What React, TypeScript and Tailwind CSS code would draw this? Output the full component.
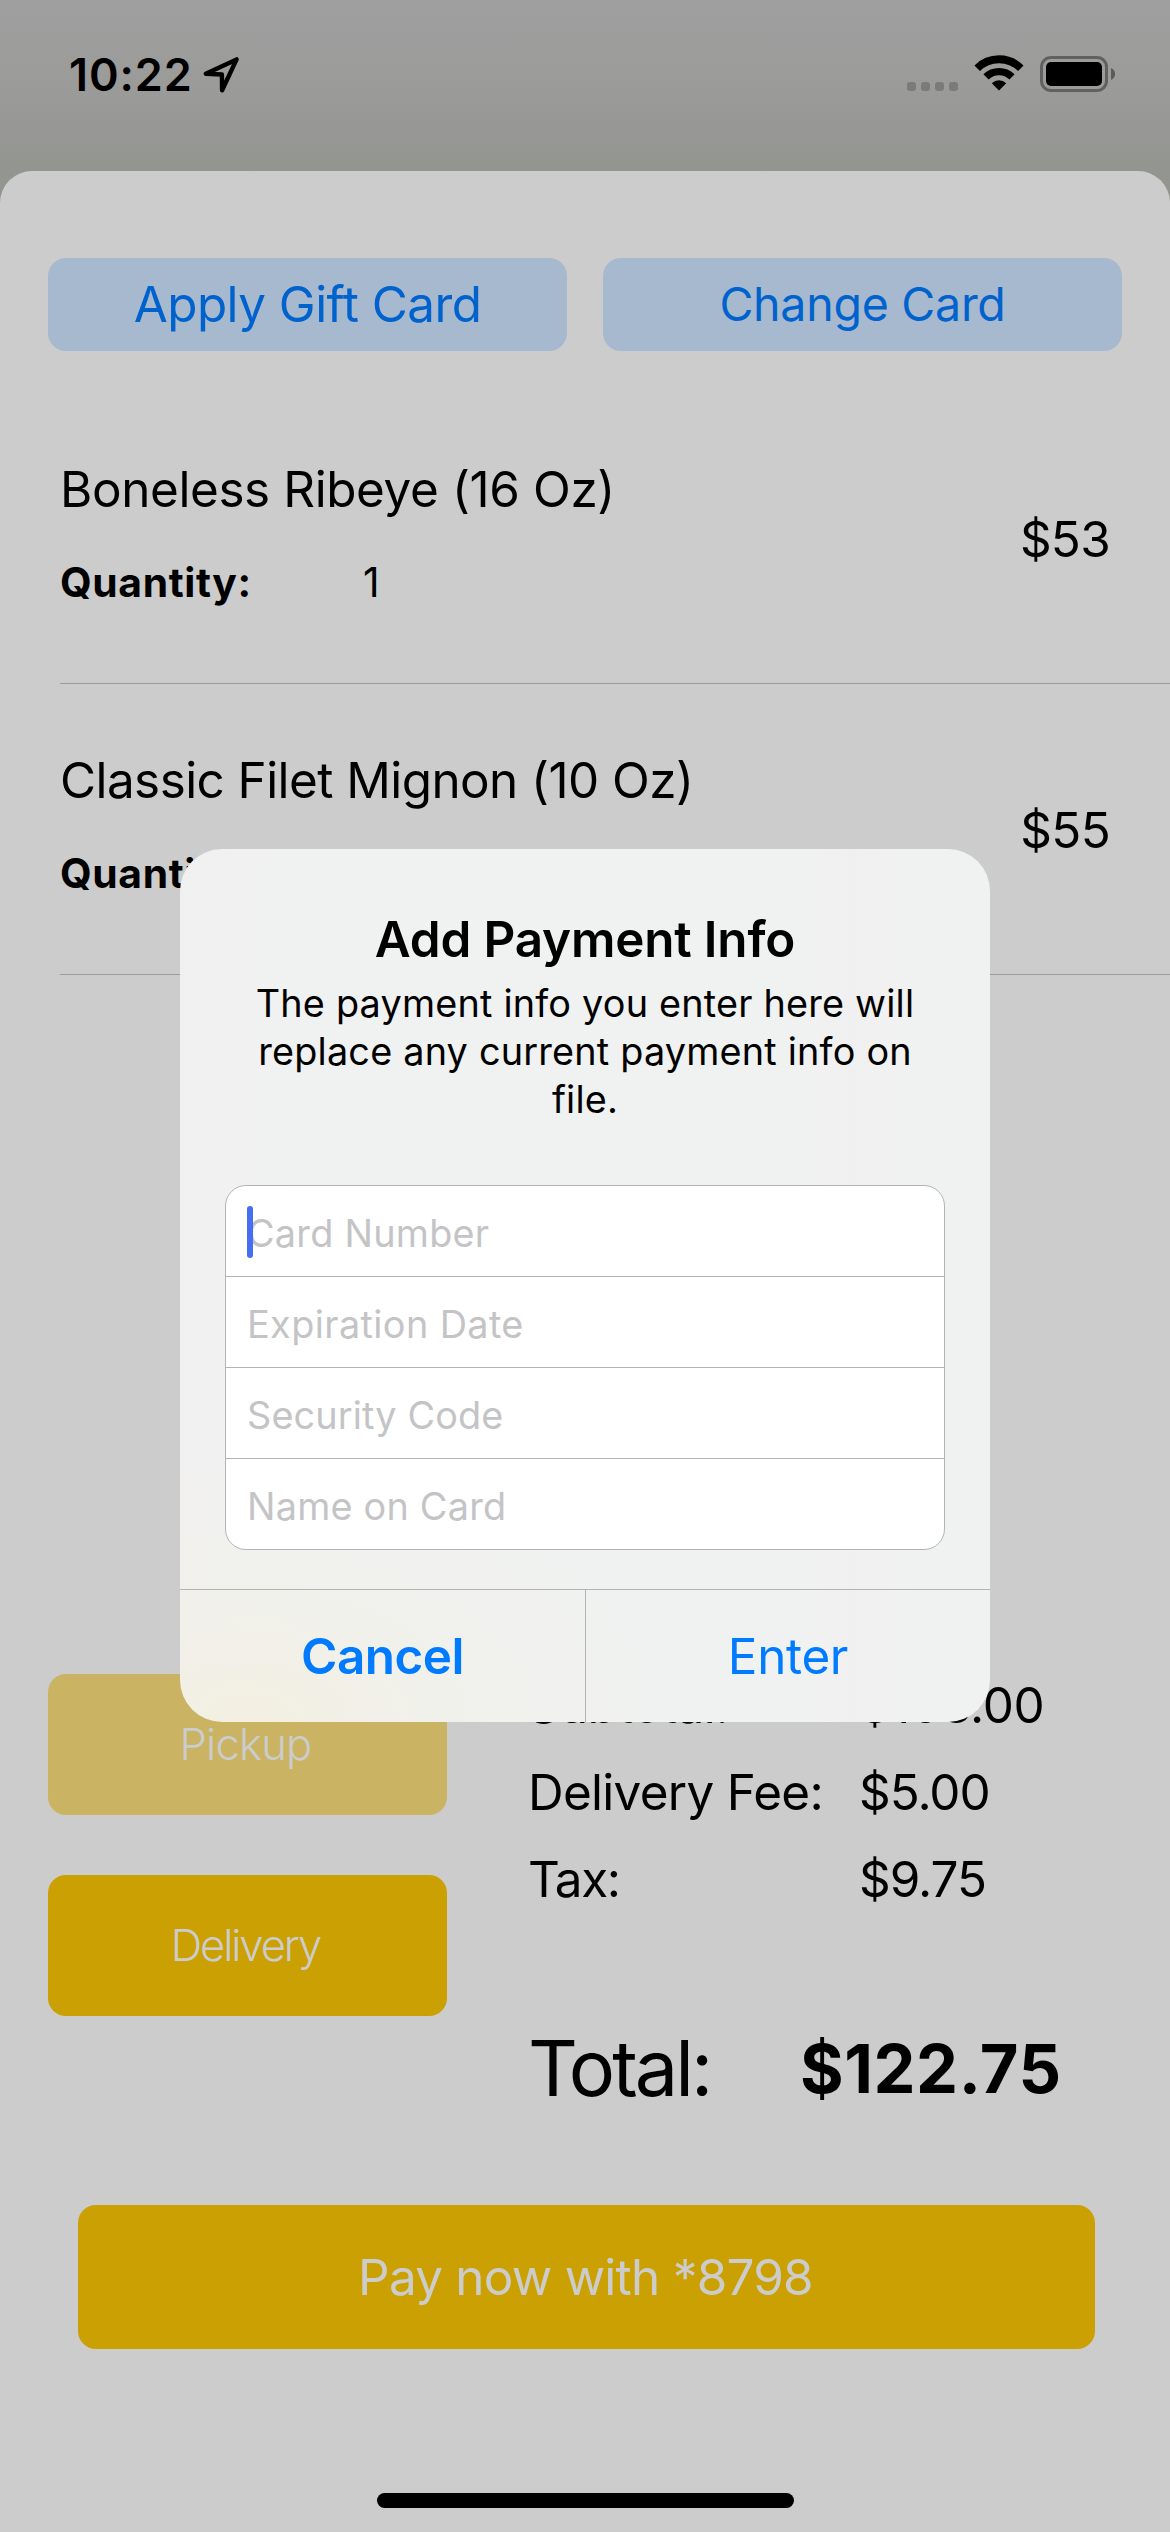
import React from "react";

const items = [
  { name: "Boneless Ribeye (16 Oz)", quantity: 1, price: "$53", tracking: "tracking-[-0.38px]" },
  { name: "Classic Filet Mignon (10 Oz)", quantity: 1, price: "$55", tracking: "tracking-[-0.55px]" },
];

const costs = [
  { label: "Subtotal:", value: "$108.00", labelTracking: "tracking-[-0.69px]", valueTracking: "tracking-[-0.34px]" },
  { label: "Delivery Fee:", value: "$5.00", labelTracking: "tracking-[-0.69px]", valueTracking: "tracking-[-1px]" },
  { label: "Tax:", value: "$9.75", labelTracking: "tracking-[-1.4px]", valueTracking: "tracking-[-1px]" },
];

const fields = [
  { label: "Card Number", tracking: "tracking-[0.25px]" },
  { label: "Expiration Date", tracking: "tracking-[0.4px]" },
  { label: "Security Code", tracking: "tracking-[0.14px]" },
  { label: "Name on Card", tracking: "tracking-[0.22px]" },
];

const message = [
  "The payment info you enter here will",
  "replace any current payment info on",
  "file.",
];

function LocationIcon() {
  return (
    <svg width="37" height="37" viewBox="0 0 37 37" fill="none" stroke="black" strokeWidth="4.4" strokeLinejoin="round">
      <path d="M2.8 17.7 33.6 3.4 19.1 34.3 18.9 18.5Z" />
    </svg>
  );
}

function WifiIcon() {
  return (
    <svg width="50" height="37" viewBox="0 0 50 37" fill="none" stroke="black">
      <path d="M3.2 13.2A31 31 0 0 1 46.8 13.2" strokeWidth="7.8" />
      <path d="M12 21.9A18.6 18.6 0 0 1 38 21.9" strokeWidth="7.4" />
      <path d="M25 35.4 17.8 28.2A10.3 10.3 0 0 1 32.2 28.2Z" fill="black" stroke="none" />
    </svg>
  );
}

function BatteryIcon() {
  return (
    <div className="flex items-center">
      <div className="h-9 w-[68px] rounded-[11px] border-[3px] border-[#616260] p-[3px]">
        <div className="h-full rounded-[5px] bg-black" />
      </div>
      <svg className="ml-[3px]" width="4" height="12" viewBox="0 0 4 12">
        <path d="M0 0C5.4 2.2 5.4 9.8 0 12Z" fill="#5a5b5a" />
      </svg>
    </div>
  );
}

function StatusBar() {
  return (
    <header className="flex h-[171px] items-start justify-between pt-14 pr-[55px] pl-[69px]">
      <div className="flex h-[37px] items-center">
        <span className="text-[45px] leading-9 font-semibold tracking-[0.9px]">10:22</span>
        <span className="ml-2.5">
          <LocationIcon />
        </span>
      </div>
      <div className="flex h-9 items-start">
        <div className="mt-[26px] flex gap-[5px]">
          {[0, 1, 2, 3].map((dot) => (
            <span key={dot} className="size-[9px] rounded-[3px] bg-[#7b7b7a]" />
          ))}
        </div>
        <span className="mt-[-1px] ml-4">
          <WifiIcon />
        </span>
        <span className="ml-4">
          <BatteryIcon />
        </span>
      </div>
    </header>
  );
}

function PaymentDialog() {
  return (
    <div className="absolute top-[849px] left-[180px] flex w-[810px] flex-col overflow-hidden rounded-[42px] bg-[#f0f2f1] bg-[radial-gradient(ellipse_420px_260px_at_70px_873px,#f3efe1_0%,rgba(241,240,233,0.7)_45%,rgba(240,240,238,0)_100%),linear-gradient(90deg,#f1f0f0_0%,#f0f2f1_14%,#f0f2f1_76%,#f1f0f0_83%,#f0f2f1_91%)]">
      <h2 className="mt-[60px] text-center text-[49.4px] leading-[60px] font-semibold tracking-[-0.17px]">
        Add Payment Info
      </h2>
      <div className="mt-2.5 text-center text-[37.8px] leading-[48px] tracking-[0.2px]">
        {message.map((line) => (
          <p key={line}>{line}</p>
        ))}
      </div>
      <div className="mx-[45px] mt-[62px] divide-y divide-[#b2b3b3] overflow-hidden rounded-[21px] border border-[#b2b3b3] bg-white">
        {fields.map((field, index) => (
          <div
            key={field.label}
            className="relative flex h-[91px] items-center pt-1 pl-[21px] last:h-[90px]"
          >
            <span className={`text-[37.8px] leading-[48px] text-[#c4c4c6] ${field.tracking}`}>{field.label}</span>
            {index === 0 && <span className="absolute top-5 left-[21px] h-[52px] w-1.5 rounded-full bg-[#466ef2]" />}
          </div>
        ))}
      </div>
      <div className="mt-[39px] flex h-[133px] border-t border-[#b2b3b3] text-[49.4px] text-[#007aff]">
        <button className="w-[406px] border-r border-[#b2b3b3] font-semibold tracking-[-0.49px]">Cancel</button>
        <button className="flex-1 tracking-[-0.33px]">Enter</button>
      </div>
    </div>
  );
}

export default function App() {
  return (
    <div className="relative h-[2532px] w-[1170px] overflow-hidden bg-[linear-gradient(180deg,#9f9f9f_0px,#9b9b9a_85px,#939590_171px,#939590_220px)] font-['Inter',sans-serif] text-black">
      <StatusBar />
      <main className="flex h-[2361px] flex-col rounded-t-[32px] bg-[#cccccc] pt-[87px]">
        <div className="flex gap-9 px-12 text-[#0062cc]">
          <button className="h-[93px] w-[519px] rounded-[18px] bg-[#a7b9cf] text-[49.4px] tracking-[-0.53px]">
            Apply Gift Card
          </button>
          <button className="h-[93px] w-[519px] rounded-[18px] bg-[#a7b9cf] text-[46.5px] tracking-[-0.26px]">
            Change Card
          </button>
        </div>

        <ul className="mt-[42px]">
          {items.map((item) => (
            <li
              key={item.name}
              className="ml-[60px] flex h-[291px] items-center justify-between border-b border-[#9c9c9d] pt-0.5 pr-[60px]"
            >
              <div className="pb-3">
                <p className={`text-[49.4px] leading-[60px] ${item.tracking}`}>{item.name}</p>
                <p className="mt-[38px] flex text-[40.8px] leading-[50px]">
                  <span className="w-[303px] font-bold tracking-[0.62px]">Quantity:</span>
                  <span>{item.quantity}</span>
                </p>
              </div>
              <span className="text-[49.4px] leading-[60px] tracking-[-0.7px]">{item.price}</span>
            </li>
          ))}
        </ul>

        <section className="mt-[687px] flex pl-12">
          <div className="flex w-[399px] flex-col gap-[60px] pt-3 text-[43.6px] font-light text-[#cccccc]">
            <button className="h-[141px] rounded-[18px] bg-[#cab464] pr-1 tracking-[-0.8px]">Pickup</button>
            <button className="h-[141px] rounded-[18px] bg-[#cba002] pr-1 tracking-[-2.1px]">Delivery</button>
          </div>
          <div className="ml-[81px]">
            {costs.map((cost) => (
              <div key={cost.label} className="flex h-[87px] items-center text-[49.4px]">
                <span className={`w-[331px] ${cost.labelTracking}`}>{cost.label}</span>
                <span className={cost.valueTracking}>{cost.value}</span>
              </div>
            ))}
            <div className="mt-[96px] flex h-[100px] items-center">
              <span className="w-[272px] text-[77.3px] tracking-[-3px]">Total:</span>
              <span className="text-[66.7px] font-bold tracking-[0.56px]">$122.75</span>
            </div>
          </div>
        </section>

        <button className="mt-[86px] ml-[78px] h-36 w-[1017px] rounded-[18px] bg-[#cba002] pr-0.5 text-[49.4px] tracking-[-0.73px] text-[#cccccc]">
          Pay now with *8798
        </button>
        <div className="mt-36 ml-[377px] h-[15px] w-[417px] rounded-full bg-black" />
      </main>
      <PaymentDialog />
    </div>
  );
}
